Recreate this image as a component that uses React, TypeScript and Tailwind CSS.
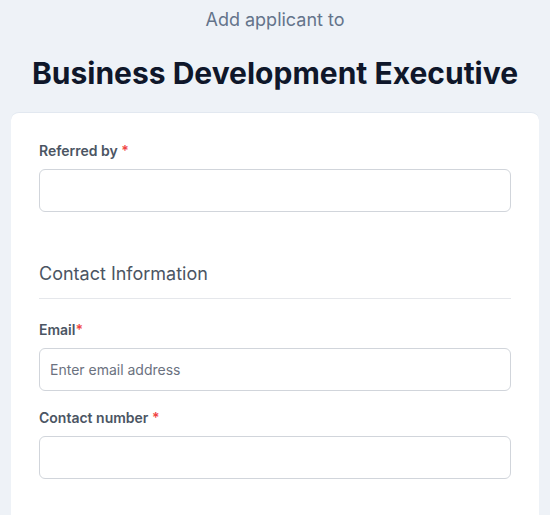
import React from "react";

function Label({ text, tight }: { text: string; tight?: boolean }) {
  return (
    <label className="block text-[14px] leading-5 font-semibold text-[#4b5563] mb-2">
      {text}
      {tight ? "" : " "}
      <span className="text-[#ef4444]">*</span>
    </label>
  );
}

export default function App() {
  return (
    <div
      className="min-h-[515px] bg-[#eef2f7] overflow-hidden"
      style={{ fontFamily: "Inter, 'Noto Sans', sans-serif" }}
    >
      <div className="pt-[8px] text-center">
        <div className="text-[18px] leading-6 text-[#64748b]">Add applicant to</div>
        <h1 className="mt-[23px] text-[30px] leading-9 font-bold text-[#0f172a]">
          Business Development Executive
        </h1>
      </div>
      <div className="mx-[11px] mt-[21px] bg-white rounded-t-lg border-t border-[#e2e8f0] px-[28px] pt-[28px] pb-10 min-h-[420px]">
        <Label text="Referred by" />
        <input className="block w-full h-[43px] rounded-md border border-[#d1d5db] px-3 text-[14px] outline-none" />
        <div className="mt-[48px] text-[18px] leading-7 text-[#4b5563] pb-[10px] border-b border-[#e5e7eb]">
          Contact Information
        </div>
        <div className="mt-[21px]">
          <Label text="Email" tight />
          <input
            placeholder="Enter email address"
            className="block w-full h-[43px] rounded-md border border-[#d1d5db] px-[10px] text-[14px] outline-none placeholder:text-[#6b7280]"
          />
        </div>
        <div className="mt-[17px]">
          <Label text="Contact number" />
          <input className="block w-full h-[43px] rounded-md border border-[#d1d5db] px-3 text-[14px] outline-none" />
        </div>
      </div>
    </div>
  );
}
